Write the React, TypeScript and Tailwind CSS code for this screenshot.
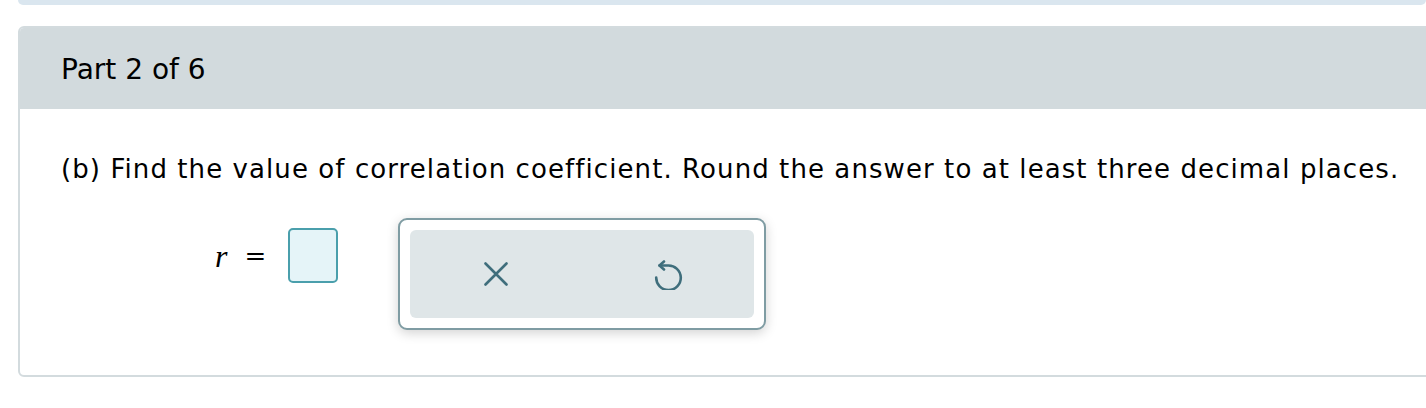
import React from 'react';

function ClearIcon() {
  return (
    <svg width="24" height="24" viewBox="0 0 24 24" fill="none" stroke="#3f6e7c" strokeWidth="2.6" strokeLinecap="round">
      <path d="M1.5 1.5 L22.5 22.5 M22.5 1.5 L1.5 22.5" />
    </svg>
  );
}

function UndoIcon() {
  return (
    <svg width="30" height="30" viewBox="0 0 30 30" fill="none" stroke="#3f6e7c" strokeWidth="2.6" strokeLinecap="round" strokeLinejoin="round">
      <path d="M3.2 17.5 A12.3 12.3 0 1 0 15 5.5 H6.5" />
      <path d="M11 1.5 L6.5 5.5 L11 9.5" />
    </svg>
  );
}

export default function App() {
  return (
    <div className="w-[1426px] h-[408px] overflow-hidden bg-white font-['DejaVu_Sans',sans-serif] text-black">
      <div className="ml-[18px] h-[5px] bg-[#dae6ef] rounded-b-[6px]" />

      <div className="ml-[18px] mt-[21px] w-[1430px] border-2 border-[#d3dbde] rounded-[6px] overflow-hidden">
        {/* Header */}
        <div className="h-[81px] bg-[#d2dadd] flex items-center pl-[41px] pt-[3px] text-[28px] leading-none">
          Part 2 of 6
        </div>

        {/* Body */}
        <div className="pl-[41px] pt-[45px] h-[266px]">
          <p className="text-[26px] leading-[30px] tracking-[1.08px]">
            (b) Find the value of correlation coefficient. Round the answer to at least three decimal places.
          </p>

          <div className="flex items-start mt-[34px]">
            <div className="flex items-center h-[55px] mt-[10px] ml-[154px]">
              <span className="font-['Liberation_Serif',serif] italic text-[32px] leading-none">r</span>
              <span className="font-['DejaVu_Serif',serif] text-[26px] leading-none ml-[17px]">=</span>
              <div className="ml-[22px] w-[50px] h-[55px] rounded-[5px] border-2 border-[#4a9fac] bg-[#e5f4f8]" />
            </div>

            <div className="ml-[60px] w-[368px] h-[112px] rounded-[9px] border-2 border-[#7f9ca3] bg-white p-[10px] shadow-[0_3px_12px_rgba(0,0,0,0.18)]">
              <div className="h-full rounded-[6px] bg-[#dfe6e8] flex items-center">
                <div className="ml-[74px]"><ClearIcon /></div>
                <div className="ml-[145px] mt-[2px]"><UndoIcon /></div>
              </div>
            </div>
          </div>
        </div>
      </div>
    </div>
  );
}
